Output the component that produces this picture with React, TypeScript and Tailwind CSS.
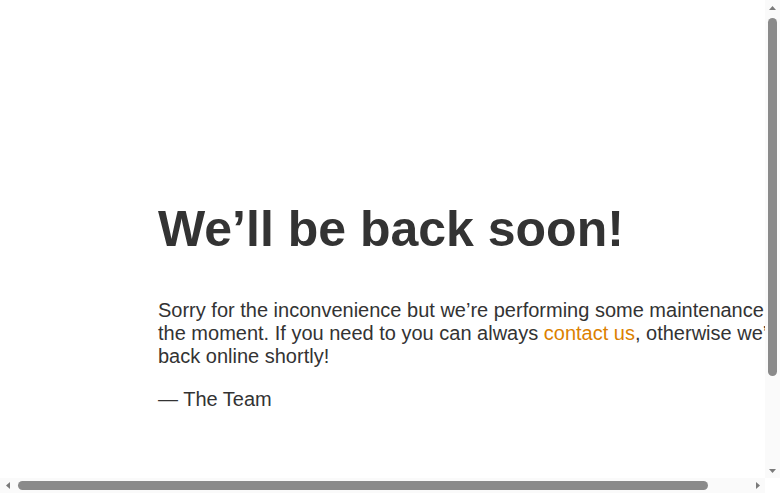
import React from "react";

const Arrow = ({ dir }: { dir: "up" | "down" | "left" | "right" }) => {
    const points = {
        up: "0,4 3.5,0 7,4",
        down: "0,0 7,0 3.5,4",
        left: "4,0 4,7 0,3.5",
        right: "0,0 4,3.5 0,7",
    }[dir];
    const vertical = dir === "up" || dir === "down";
    return (
        <svg width={vertical ? 7 : 4} height={vertical ? 4 : 7} viewBox={vertical ? "0 0 7 4" : "0 0 4 7"}>
            <polygon points={points} fill="#7a7a7a" />
        </svg>
    );
};

export default function App() {
    return (
        <div className="flex flex-col h-[493px] w-[780px] bg-white">
            <div className="flex flex-1 min-h-0">
                {/* Page content, clipped by the viewport */}
                <div className="flex-1 min-w-0 overflow-hidden">
                    <div
                        className="m-2 p-[150px] text-center text-[20px] leading-[normal] text-[#333] w-max"
                        style={{ fontFamily: '"Liberation Sans", Helvetica, Arial, sans-serif' }}
                    >
                        <article className="block w-[650px] mx-auto text-left">
                            <h1 className="text-[50px] font-bold leading-[normal] my-[41.5px]">We’ll be back soon!</h1>
                            <div>
                                <p className="my-5">
                                    Sorry for the inconvenience but we’re performing some maintenance at the moment.
                                    If you need to you can always{" "}
                                    <a href="#" className="text-[#dc8100] no-underline">
                                        contact us
                                    </a>
                                    , otherwise we’ll be back online shortly!
                                </p>
                                <p className="my-5">— The Team</p>
                            </div>
                        </article>
                    </div>
                </div>

                {/* Vertical scrollbar */}
                <div className="w-[15px] flex flex-col bg-[#fafafa]">
                    <div className="h-[15px] flex items-center justify-center">
                        <Arrow dir="up" />
                    </div>
                    <div className="flex-1 flex flex-col items-center pt-[3px]">
                        <div className="w-[9px] h-[358px] rounded-full bg-[#8a8a8a]" />
                    </div>
                    <div className="h-[15px] flex items-center justify-center">
                        <Arrow dir="down" />
                    </div>
                </div>
            </div>

            {/* Horizontal scrollbar */}
            <div className="flex h-[15px]">
                <div className="flex-1 flex bg-[#fafafa]">
                    <div className="w-[15px] flex items-center justify-center">
                        <Arrow dir="left" />
                    </div>
                    <div className="flex-1 flex items-center pl-[3px]">
                        <div className="h-[9px] w-[690px] rounded-full bg-[#8a8a8a]" />
                    </div>
                    <div className="w-[15px] flex items-center justify-center">
                        <Arrow dir="right" />
                    </div>
                </div>
                <div className="w-[15px] bg-white" />
            </div>
        </div>
    );
}
